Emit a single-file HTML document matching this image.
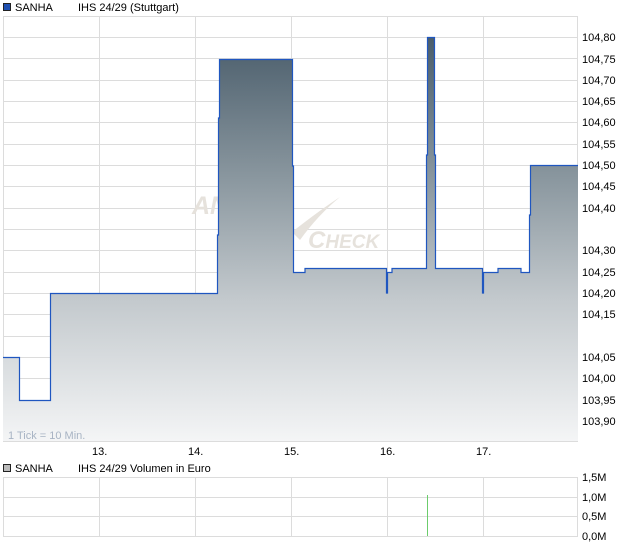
<!DOCTYPE html>
<html><head><meta charset="utf-8"><style>
html,body{margin:0;padding:0;background:#fff;width:620px;height:546px;overflow:hidden}
svg{display:block;font-family:"Liberation Sans",sans-serif}
</style></head><body>
<svg width="620" height="546" viewBox="0 0 620 546" xmlns="http://www.w3.org/2000/svg">
<defs>
<linearGradient id="g" gradientUnits="userSpaceOnUse" x1="0" y1="37" x2="0" y2="441">
<stop offset="0" stop-color="#4a5d6b"/>
<stop offset="0.35" stop-color="#8a979f"/>
<stop offset="0.65" stop-color="#c3c9cd"/>
<stop offset="1" stop-color="#f4f5f6"/>
</linearGradient>
</defs>
<rect x="3.5" y="3.5" width="7" height="7" fill="#1f4fb0" stroke="#222" stroke-width="1"/>
<text x="15" y="11" font-size="11" fill="#000">SANHA</text>
<text x="78" y="11" font-size="11" fill="#000">IHS 24/29 (Stuttgart)</text>
<g stroke="#dcdcdc" stroke-width="1">
<line x1="3" y1="16.5" x2="578" y2="16.5"/>
<line x1="3" y1="37.5" x2="578" y2="37.5"/><line x1="3" y1="58.5" x2="578" y2="58.5"/><line x1="3" y1="80.5" x2="578" y2="80.5"/><line x1="3" y1="101.5" x2="578" y2="101.5"/><line x1="3" y1="122.5" x2="578" y2="122.5"/><line x1="3" y1="144.5" x2="578" y2="144.5"/><line x1="3" y1="165.5" x2="578" y2="165.5"/><line x1="3" y1="186.5" x2="578" y2="186.5"/><line x1="3" y1="208.5" x2="578" y2="208.5"/><line x1="3" y1="229.5" x2="578" y2="229.5"/><line x1="3" y1="250.5" x2="578" y2="250.5"/><line x1="3" y1="272.5" x2="578" y2="272.5"/><line x1="3" y1="293.5" x2="578" y2="293.5"/><line x1="3" y1="314.5" x2="578" y2="314.5"/><line x1="3" y1="336.5" x2="578" y2="336.5"/><line x1="3" y1="357.5" x2="578" y2="357.5"/><line x1="3" y1="378.5" x2="578" y2="378.5"/><line x1="3" y1="400.5" x2="578" y2="400.5"/><line x1="3" y1="421.5" x2="578" y2="421.5"/>
<line x1="3" y1="441.5" x2="578" y2="441.5"/>
<line x1="3.5" y1="16" x2="3.5" y2="441"/>
<line x1="99.5" y1="16" x2="99.5" y2="441"/><line x1="195.5" y1="16" x2="195.5" y2="441"/><line x1="291.5" y1="16" x2="291.5" y2="441"/><line x1="387.5" y1="16" x2="387.5" y2="441"/><line x1="483.5" y1="16" x2="483.5" y2="441"/>
<line x1="577.5" y1="16" x2="577.5" y2="441"/>
</g>
<text x="192" y="214" font-size="25" font-style="italic" font-weight="bold" fill="#e6e2dc">AN</text>
<path d="M292,232 Q320,210 340,197 Q318,215 300,240 Z" fill="#e6e2dc"/>
<text x="308" y="248" font-size="24" font-style="italic" font-weight="bold" fill="#e6e2dc">C<tspan font-size="19">HECK</tspan></text>
<path d="M3,357 H19 V400 H50 V293 H217 V235 H218 V118 H219 V59 H292 V166 H293 V272 H305 V268 H386 V293 H387 V272 H392 V268 H426 V155 H427 V37 H434 V155 H435 V268 H482 V293 H483 V272 H498 V268 H521 V272 H529 V215 H530 V165 H578 V441 H3 Z" fill="url(#g)"/>
<path d="M3,357.5 H19.5 V400.5 H50.5 V293.5 H217.5 V235 H218.5 V118 H219.5 V59.5 H292.5 V166 H293.5 V272.5 H305 V268.5 H386.5 V293 H387.5 V272.5 H392 V268.5 H426.5 V155 H427.5 V37.5 H434.5 V155 H435.5 V268.5 H482.5 V293 H483.5 V272.5 H498 V268.5 H521 V272.5 H529.5 V215 H530.5 V165.5 H578" fill="none" stroke="#1f56c0" stroke-width="1.2"/>
<g font-size="11" fill="#000">
<text x="582" y="41">104,80</text><text x="582" y="63">104,75</text><text x="582" y="84">104,70</text><text x="582" y="105">104,65</text><text x="582" y="126">104,60</text><text x="582" y="148">104,55</text><text x="582" y="169">104,50</text><text x="582" y="190">104,45</text><text x="582" y="212">104,40</text><text x="582" y="254">104,30</text><text x="582" y="276">104,25</text><text x="582" y="297">104,20</text><text x="582" y="318">104,15</text><text x="582" y="361">104,05</text><text x="582" y="382">104,00</text><text x="582" y="404">103,95</text><text x="582" y="425">103,90</text>
<text x="92" y="455">13.</text><text x="188" y="455">14.</text><text x="284" y="455">15.</text><text x="380" y="455">16.</text><text x="476" y="455">17.</text>
</g>
<text x="8" y="439" font-size="11" fill="#a8b4c4">1 Tick = 10 Min.</text>
<rect x="3.5" y="464.5" width="7" height="7" fill="#bbb" stroke="#222" stroke-width="1"/>
<text x="15" y="472" font-size="11" fill="#000">SANHA</text>
<text x="78" y="472" font-size="11" fill="#000">IHS 24/29 Volumen in Euro</text>
<g stroke="#dcdcdc" stroke-width="1">
<line x1="3" y1="477.5" x2="578" y2="477.5"/><line x1="3" y1="497.5" x2="578" y2="497.5"/><line x1="3" y1="516.5" x2="578" y2="516.5"/><line x1="3" y1="536.5" x2="578" y2="536.5"/>
<line x1="3.5" y1="477" x2="3.5" y2="536"/><line x1="99.5" y1="477" x2="99.5" y2="536"/><line x1="195.5" y1="477" x2="195.5" y2="536"/><line x1="291.5" y1="477" x2="291.5" y2="536"/><line x1="387.5" y1="477" x2="387.5" y2="536"/><line x1="483.5" y1="477" x2="483.5" y2="536"/><line x1="577.5" y1="477" x2="577.5" y2="536"/>
</g>
<line x1="427.5" y1="495" x2="427.5" y2="536" stroke="#6ccc6c" stroke-width="1"/>
<g font-size="11" fill="#000">
<text x="582" y="481">1,5M</text><text x="582" y="501">1,0M</text><text x="582" y="520">0,5M</text><text x="582" y="540">0,0M</text>
</g>
</svg>
</body></html>
